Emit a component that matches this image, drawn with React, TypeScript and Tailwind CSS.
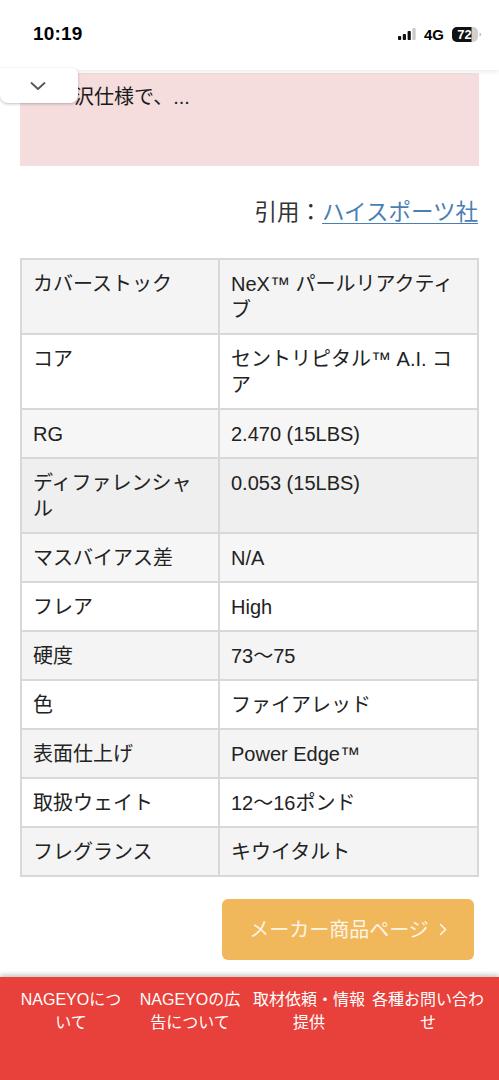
import React from "react";

const rows: { k: string; v: string; bg: string }[] = [
  { k: "カバーストック", v: "NeX™ パールリアクティブ", bg: "bg-[#f4f4f4]" },
  { k: "コア", v: "セントリピタル™ A.I. コア", bg: "bg-white" },
  { k: "RG", v: "2.470 (15LBS)", bg: "bg-[#f6f6f6]" },
  { k: "ディファレンシャル", v: "0.053 (15LBS)", bg: "bg-[#efefef]" },
  { k: "マスバイアス差", v: "N/A", bg: "bg-[#f6f6f6]" },
  { k: "フレア", v: "High", bg: "bg-white" },
  { k: "硬度", v: "73〜75", bg: "bg-[#f4f4f4]" },
  { k: "色", v: "ファイアレッド", bg: "bg-white" },
  { k: "表面仕上げ", v: "Power Edge™", bg: "bg-[#f4f4f4]" },
  { k: "取扱ウェイト", v: "12〜16ポンド", bg: "bg-white" },
  { k: "フレグランス", v: "キウイタルト", bg: "bg-[#f4f4f4]" },
];

const font = {
  fontFamily:
    '"Liberation Sans", "Noto Sans CJK JP", "Noto Sans", sans-serif',
};

export default function App() {
  return (
    <div
      className="relative w-[499px] h-[1080px] bg-white overflow-hidden text-[#222] flex flex-col"
      style={font}
    >
      {/* status bar */}
      <div className="relative z-10 h-[70px] shrink-0 bg-white shadow-[0_2px_4px_rgba(0,0,0,0.08)] flex items-center justify-between pl-[33px] pr-[17px] pb-[2px]">
        <span className="text-[19px] font-bold tracking-[0.2px] text-black">10:19</span>
        <div className="flex items-center gap-[8px]">
          <svg width="18" height="12" viewBox="0 0 18 12">
            <rect x="0" y="8" width="3.2" height="4" rx="0.8" fill="#111" />
            <rect x="4.8" y="6" width="3.2" height="6" rx="0.8" fill="#111" />
            <rect x="9.6" y="3" width="3.2" height="9" rx="0.8" fill="#111" />
            <rect x="14.4" y="0" width="3.2" height="12" rx="0.8" fill="#c8c8c8" />
          </svg>
          <span className="text-[15px] font-bold text-black leading-none">4G</span>
          <svg width="30" height="15" viewBox="0 0 30 15">
            <defs>
              <clipPath id="bclip">
                <rect x="0" y="0" width="26" height="15" rx="5" />
              </clipPath>
            </defs>
            <g clipPath="url(#bclip)">
              <rect x="0" y="0" width="26" height="15" fill="#cfcfcf" />
              <rect x="0" y="0" width="19.5" height="15" fill="#111" />
            </g>
            <path d="M27.5 5.5 Q29.2 5.8 29.2 7.5 Q29.2 9.2 27.5 9.5 Z" fill="#bdbdbd" />
            <text
              x="12.5"
              y="12"
              textAnchor="middle"
              fontSize="13"
              fontWeight="800"
              fill="#fff"
              fontFamily="Liberation Sans, sans-serif"
            >
              72
            </text>
          </svg>
        </div>
      </div>

      {/* dropdown tab */}
      <div className="absolute left-0 top-[68px] z-20 w-[78px] h-[35px] bg-white rounded-b-[8px] rounded-tr-[6px] shadow-[0_1px_3px_rgba(0,0,0,0.25)] flex items-center justify-center pr-[3px]">
        <svg width="16" height="10" viewBox="0 0 16 10">
          <path d="M1.5 2 L8 8 L14.5 2" stroke="#555" strokeWidth="1.8" fill="none" strokeLinecap="round" strokeLinejoin="round" />
        </svg>
      </div>

      {/* pink notice */}
      <div className="mx-[20px] mt-[3px] h-[93px] bg-[#f5dcdd] pl-[54px] pt-[11px]">
        <p className="text-[20px] leading-[26px] text-[#1a1a1a]">沢仕様で、...</p>
      </div>

      {/* citation */}
      <div className="mt-[33px] pr-[21px] text-right text-[22.5px] leading-[28px] text-[#333]">
        引用：
        <a className="text-[#4a7fb5] underline underline-offset-[3px] decoration-[1px]">
          ハイスポーツ社
        </a>
      </div>

      {/* spec table */}
      <table className="mt-[31px] mx-[20px] w-[459px] border-collapse table-fixed text-[20px] leading-[26px] text-[#222]">
        <colgroup>
          <col className="w-[198px]" />
          <col />
        </colgroup>
        <tbody>
          {rows.map((r) => (
            <tr key={r.k} className={r.bg}>
              <td className="border-2 border-[#d8d8d8] px-[11px] py-[10.5px] align-top">{r.k}</td>
              <td className="border-2 border-[#d8d8d8] px-[11px] py-[10.5px] align-top">{r.v}</td>
            </tr>
          ))}
        </tbody>
      </table>

      {/* maker button */}
      <div className="mt-[22px] flex justify-end pr-[25px]">
        <div className="w-[252px] h-[61px] rounded-[6px] bg-[#f1b75b] flex items-center justify-center text-[20px] text-[#fdf4e6] gap-[10px]">
          <span>メーカー商品ページ</span>
          <svg width="8" height="13" viewBox="0 0 8 13">
            <path d="M1.5 1.5 L6.5 6.5 L1.5 11.5" stroke="#fdf4e6" strokeWidth="1.6" fill="none" strokeLinecap="round" strokeLinejoin="round" />
          </svg>
        </div>
      </div>

      {/* footer */}
      <footer className="mt-auto h-[103px] bg-[#e8403a] shadow-[0_-2px_5px_rgba(0,0,0,0.25)] px-[13px] pt-[11px] grid grid-cols-4 gap-[3px] text-white text-[16px] leading-[23px] text-center">
        <div>NAGEYOについて</div>
        <div>NAGEYOの広告について</div>
        <div>取材依頼・情報提供</div>
        <div>各種お問い合わせ</div>
      </footer>
    </div>
  );
}
